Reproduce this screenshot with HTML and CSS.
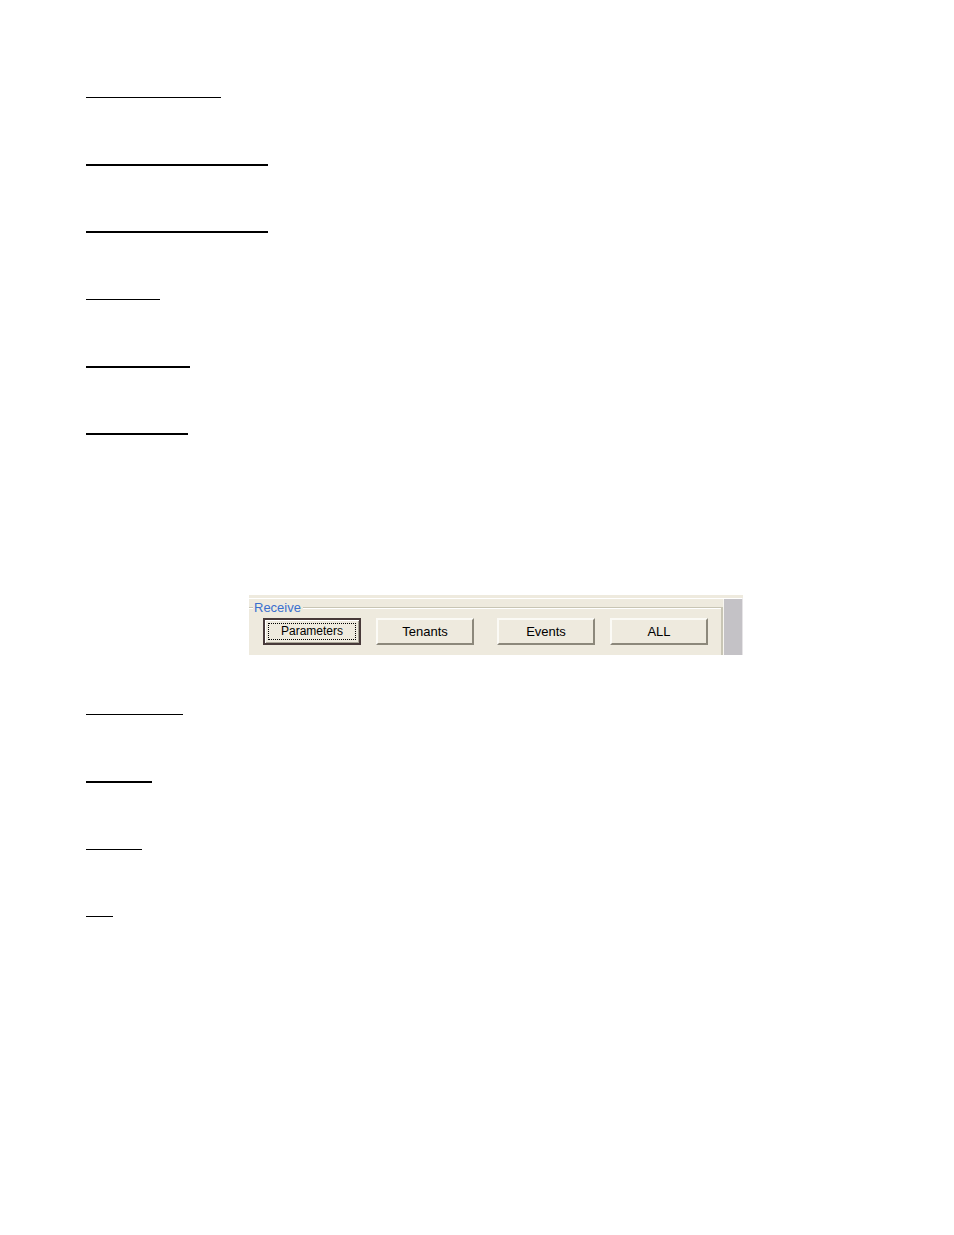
FILE: index.html
```html
<!DOCTYPE html>
<html lang="en">
<head>
    <meta charset="UTF-8">
    <meta name="viewport" content="width=device-width, initial-scale=1.0">
    <title>Receive</title>
    <link rel="stylesheet" href="styles.css">
</head>
<body>
    <main class="page">
        <div class="rules">
            <hr class="thin w-135">
            <hr class="thick w-182">
            <hr class="thick w-182">
            <hr class="thin w-74">
            <hr class="thick w-104">
            <hr class="thick w-102">
        </div>

        <form class="panel">
            <div class="panel-body">
                <fieldset class="receive">
                    <legend>Receive</legend>
                    <div class="buttons">
                        <div class="pair">
                            <button type="button" class="btn btn-default"><span class="focus">Parameters</span></button>
                            <button type="button" class="btn">Tenants</button>
                        </div>
                        <div class="pair">
                            <button type="button" class="btn">Events</button>
                            <button type="button" class="btn">ALL</button>
                        </div>
                    </div>
                </fieldset>
                <div class="side"></div>
            </div>
        </form>

        <div class="rules">
            <hr class="thin w-97">
            <hr class="thick w-66">
            <hr class="thin w-56">
            <hr class="thin w-27">
        </div>
    </main>
</body>
</html>
```
FILE: styles.css
```css
* {
    box-sizing: border-box;
}

body {
    margin: 0;
    background-color: white;
    color: black;
    font-family: "Liberation Sans", Arial, sans-serif;
    font-size: 13px;
}

.page {
    padding: 97px 48px 97px 86px;
}

/* underlines */
.rules hr {
    margin: 0;
    border: none;
    background-color: black;
}

.rules .thin {
    height: 1px;
    margin-bottom: 66px;
}

.rules .thick {
    height: 2px;
    margin-bottom: 65px;
}

.rules .thick + .thin {
    margin-top: 66px;
}

.rules hr:last-child {
    margin-bottom: 0;
}

.w-27 { width: 27px; }
.w-56 { width: 56px; }
.w-66 { width: 66px; }
.w-74 { width: 74px; }
.w-97 { width: 97px; }
.w-102 { width: 102px; }
.w-104 { width: 104px; }
.w-135 { width: 135px; }
.w-182 { width: 182px; }

/* receive panel */
.panel {
    max-width: 494px;
    margin: 160px auto 59px;
    padding-top: 3px;
    background-color: #eeeade;
}

.panel-body {
    display: flex;
    border-top: 1px solid white;
    border-right: 1px solid #e6e4e6;
}

.receive {
    flex: 1;
    min-width: 0;
    margin: 0;
    padding: 0 13px 10px 14px;
    border: solid #c8c5b4;
    border-width: 1px 2px 0 0;
    box-shadow: inset 0 1px white;
}

.receive legend {
    margin-left: -10px;
    padding: 0 2px 0 1px;
    background-color: #eeeade;
    color: #3a6fce;
    line-height: 17px;
}

.buttons {
    display: flex;
    flex-wrap: wrap;
    justify-content: space-between;
    gap: 8px;
    padding-top: 2px;
}

.pair {
    display: flex;
    gap: 15px;
}

.side {
    width: 19px;
    border-left: 1px solid #f8f6f0;
    background-color: #c4c2c6;
}

.btn {
    width: 98px;
    height: 27px;
    padding: 0;
    border: 2px solid;
    border-color: #fbfaf5 #8c887b #8c887b #fbfaf5;
    background-color: #eeeade;
    color: black;
    font-family: inherit;
    font-size: 13px;
}

.btn-default {
    padding: 2px 3px;
    border-color: #483a3a;
    box-shadow: inset 1px 1px white, inset -1px -1px #aaa698;
    font-size: 12px;
}

.focus {
    display: block;
    border: 1px dotted black;
    line-height: 15px;
}
```
